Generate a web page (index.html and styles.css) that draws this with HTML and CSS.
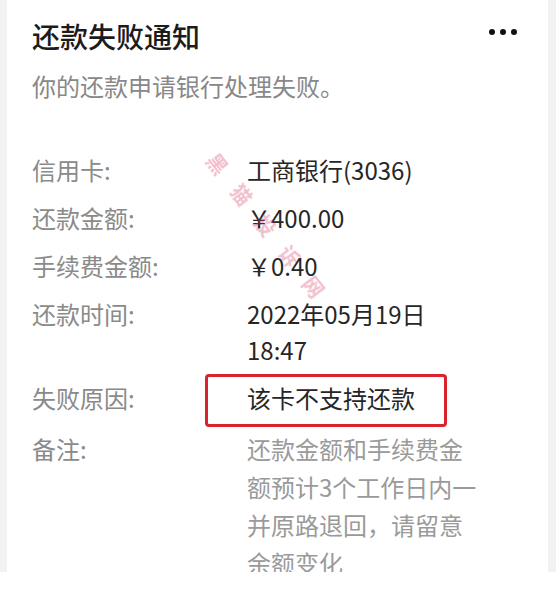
FILE: index.html
```html
<!DOCTYPE html>
<html>
<head>
    <meta charset="utf-8">
    <title>还款失败通知</title>
    <link rel="stylesheet" href="styles.css">
</head>
<body>
    <div class="card">
        <div class="card-head">
            <h1 class="title">还款失败通知</h1>
            <div class="more"><span></span><span></span><span></span></div>
        </div>
        <p class="subtitle">你的还款申请银行处理失败。</p>

        <div class="details">
            <div class="row">
                <div class="label">信用卡:</div>
                <div class="value">工商银行(3036)</div>
            </div>
            <div class="row">
                <div class="label">还款金额:</div>
                <div class="value">￥400.00</div>
            </div>
            <div class="row">
                <div class="label">手续费金额:</div>
                <div class="value">￥0.40</div>
            </div>
            <div class="row">
                <div class="label">还款时间:</div>
                <div class="value">2022年05月19日<br>18:47</div>
            </div>
            <div class="row">
                <div class="label">失败原因:</div>
                <div class="value marked">该卡不支持还款<span class="mark-box"></span></div>
            </div>
            <div class="row remark">
                <div class="label">备注:</div>
                <div class="value muted">还款金额和手续费金额预计3个工作日内一并原路退回，请留意余额变化</div>
            </div>
        </div>

        <!-- watermark over the amounts -->
        <div class="watermark">黑猫投诉网</div>
    </div>
</body>
</html>
```

FILE: styles.css
```css
body {
    margin: 0;
    background-color: #fff;
    font-family: "Noto Sans CJK SC", "Noto Sans", sans-serif;
}

.card {
    position: relative;
    height: 572px;
    overflow: hidden;
    box-sizing: border-box;
    padding: 14px 31px 0 25px;
    border-left: 7px solid #f2f2f2;
    border-right: 8px solid #f2f2f2;
    background-color: #fff;
}

.card-head {
    display: flex;
    align-items: center;
    justify-content: space-between;
}

.title {
    margin: 0;
    font-size: 28px;
    line-height: 44px;
    font-weight: 500;
    color: #1c1c1c;
}

.more {
    display: flex;
    gap: 5px;
    margin-top: -8px;
}

.more span {
    width: 6px;
    height: 6px;
    border-radius: 50%;
    background-color: #111;
}

.subtitle {
    margin: 10px 0 0;
    font-size: 24px;
    line-height: 36px;
    color: #888;
}

.details {
    display: flex;
    flex-direction: column;
    gap: 12px;
    margin-top: 48px;
}

.row {
    display: flex;
    font-size: 24px;
    line-height: 36px;
}

.row.remark {
    margin-top: 2px;
    line-height: 38px;
}

.label {
    width: 215px;
    flex: none;
    color: #8a8a8a;
}

.value {
    width: 234px;
    color: #262626;
}

.value.muted {
    color: #9a9a9a;
}

.marked {
    position: relative;
}

.mark-box {
    position: absolute;
    left: -42px;
    top: -6px;
    width: 242px;
    height: 53px;
    box-sizing: border-box;
    border: 3px solid #d9232d;
    border-radius: 4px;
}

.watermark {
    position: absolute;
    left: 212px;
    top: 150px;
    transform-origin: left top;
    transform: rotate(52deg);
    font-size: 20px;
    line-height: 20px;
    font-weight: 700;
    letter-spacing: 19px;
    white-space: nowrap;
    color: rgba(215, 70, 105, 0.35);
    filter: blur(0.7px);
}
```
